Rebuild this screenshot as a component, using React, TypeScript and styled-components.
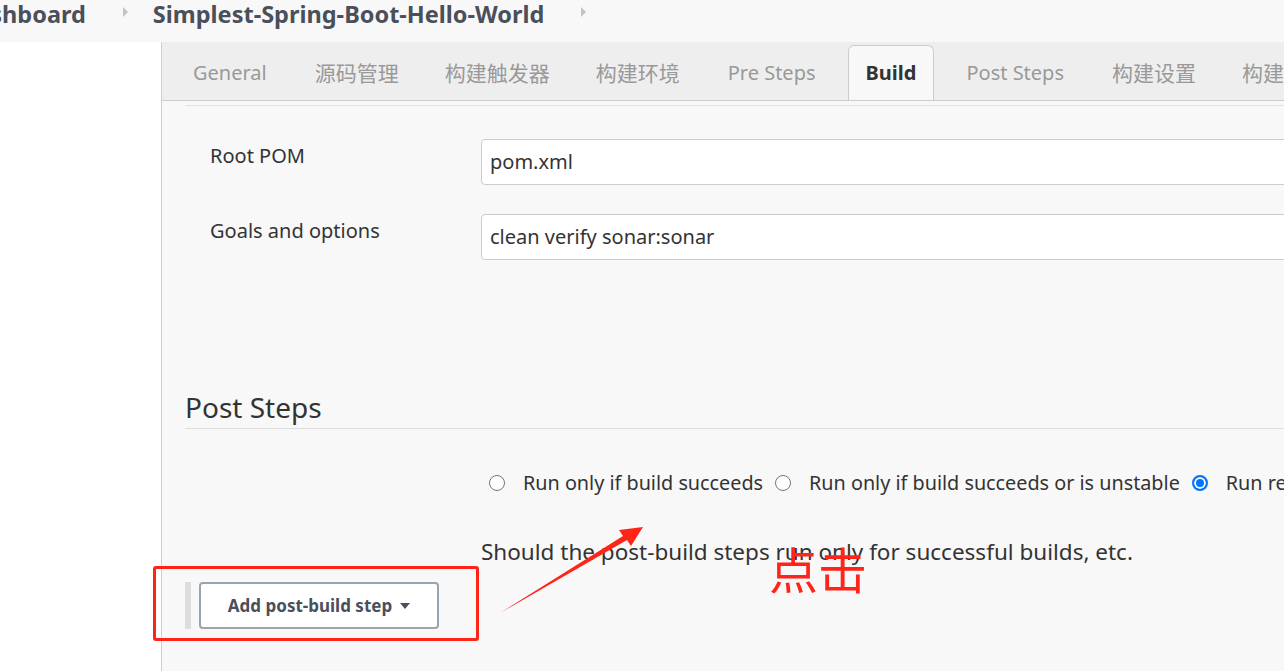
import React from "react";
import styled, { createGlobalStyle } from "styled-components";

const GlobalStyle = createGlobalStyle`
  html, body { margin: 0; padding: 0; }
  body {
    font-family: "Noto Sans", "Noto Sans CJK SC", sans-serif;
    background: #ffffff;
    color: #333;
    overflow: hidden;
  }
`;

const Page = styled.div`
  position: relative;
  width: 1284px;
  height: 671px;
  overflow: hidden;
  display: flex;
  flex-direction: column;
`;

const TopBar = styled.div`
  height: 42px;
  flex: 0 0 42px;
  background: #f8f8f8;
  display: flex;
  align-items: center;
  white-space: nowrap;
  overflow: hidden;
`;

const Crumb = styled.span<{ $offset?: number }>`
  font-size: 23.5px;
  font-weight: 700;
  color: #4a4f5a;
  margin-left: ${(p) => p.$offset ?? 0}px;
  line-height: 28px;
  margin-top: -14px;
`;

const Sep = styled.span`
  display: inline-block;
  flex: 0 0 auto;
  width: 0;
  height: 0;
  border-top: 5px solid transparent;
  border-bottom: 5px solid transparent;
  border-left: 5px solid #c4c4c4;
  margin: -18px 25px 0 37px;
`;

const Body = styled.div`
  flex: 1;
  display: flex;
  min-height: 0;
`;

const Sidebar = styled.div`
  width: 161px;
  flex: 0 0 161px;
  background: #ffffff;
  border-right: 1px solid #cfcfcf;
`;

const Main = styled.div`
  flex: 1;
  background: #f8f8f8;
  overflow: hidden;
  display: flex;
  flex-direction: column;
`;

const TabBar = styled.div`
  height: 58px;
  flex: 0 0 58px;
  background: #eeeeee;
  border-bottom: 1px solid #cccccc;
  display: flex;
  align-items: flex-end;
  padding-left: 6px;
  white-space: nowrap;
`;

const Tab = styled.div<{ $active?: boolean; $cjk?: boolean }>`
  height: 55px;
  box-sizing: border-box;
  margin: 0 7px;
  padding: 0 ${(p) => (p.$cjk ? "15px" : "17px")} 2px;
  display: flex;
  align-items: center;
  font-size: ${(p) => (p.$cjk ? "21px" : "20px")};
  color: ${(p) => (p.$active ? "#333" : "#999")};
  font-weight: ${(p) => (p.$active ? 700 : 400)};
  background: ${(p) => (p.$active ? "#f8f8f8" : "transparent")};
  border: 1px solid ${(p) => (p.$active ? "#cccccc" : "transparent")};
  border-bottom: none;
  border-radius: 6px 6px 0 0;
`;

const Content = styled.div`
  padding-left: 23px;
  padding-top: 4px;
  min-width: 1400px;
`;

const Section = styled.div`
  border-top: 1px solid #e2e2e2;
  padding-top: 33px;
`;

const FormRow = styled.div`
  display: flex;
  align-items: flex-start;
  margin-bottom: 29px;
`;

const Label = styled.div`
  width: 271px;
  padding-left: 25px;
  font-size: 20px;
  color: #333;
  line-height: 28px;
  padding-top: 3px;
`;

const TextInput = styled.div`
  width: 1000px;
  height: 46px;
  box-sizing: border-box;
  background: #ffffff;
  border: 1px solid #cccccc;
  border-radius: 4px;
  padding-left: 8px;
  padding-bottom: 2px;
  display: flex;
  align-items: center;
  font-size: 20px;
  color: #333;
`;

const Heading = styled.h2`
  margin: 127px 0 0;
  font-size: 28px;
  font-weight: 400;
  color: #333;
  line-height: 40px;
  padding-bottom: 1px;
  border-bottom: 1px solid #dddddd;
`;

const RadioRow = styled.div`
  display: flex;
  align-items: center;
  margin: 40px 0 0 300px;
  white-space: nowrap;
`;

const Radio = styled.span<{ $checked?: boolean }>`
  width: 16px;
  height: 16px;
  box-sizing: border-box;
  border-radius: 50%;
  background: ${(p) => (p.$checked ? "#0075ff" : "#fff")};
  border: ${(p) => (p.$checked ? "2px solid #0075ff" : "1px solid #767676")};
  box-shadow: ${(p) => (p.$checked ? "inset 0 0 0 2px #fff" : "none")};
  margin-left: 4px;
  margin-right: 18px;
  flex: 0 0 auto;
`;

const RadioLabel = styled.span`
  font-size: 19.8px;
  color: #333;
  margin-right: 8px;
  line-height: 28px;
`;

const Description = styled.div`
  margin: 40px 0 0 296px;
  font-size: 22.5px;
  color: #333;
  line-height: 30px;
  white-space: nowrap;
`;

const ButtonRow = styled.div`
  display: flex;
  align-items: stretch;
  margin-top: 15px;
  gap: 8px;
`;

const Strip = styled.div`
  width: 6px;
  background: #dddddd;
`;

const AddButton = styled.div`
  width: 240px;
  height: 47px;
  box-sizing: border-box;
  background: #ffffff;
  border: 2px solid #9aa4ad;
  border-radius: 4px;
  display: flex;
  align-items: center;
  justify-content: center;
  gap: 8px;
  font-size: 17px;
  font-weight: 700;
  color: #4a4f5a;
`;

const Caret = styled.span`
  width: 0;
  height: 0;
  border-left: 5px solid transparent;
  border-right: 5px solid transparent;
  border-top: 6px solid #4a4f5a;
`;

const Annotation = styled.div`
  position: absolute;
  left: 153px;
  top: 566px;
  width: 326px;
  height: 75px;
  box-sizing: border-box;
  border: 3px solid #ff2318;
  border-radius: 3px;
`;

const ClickNote = styled.div`
  position: absolute;
  left: 769px;
  top: 536px;
  font-family: "Noto Sans CJK SC", sans-serif;
  font-size: 49px;
  line-height: 64px;
  color: #ff2318;
`;

const ArrowSvg = styled.svg`
  position: absolute;
  left: 495px;
  top: 520px;
`;

export default function App() {
  return (
    <>
      <GlobalStyle />
      <Page>
        <TopBar>
          <Crumb $offset={-41}>Dashboard</Crumb>
          <Sep />
          <Crumb>Simplest-Spring-Boot-Hello-World</Crumb>
          <Sep />
        </TopBar>
        <Body>
          <Sidebar />
          <Main>
            <TabBar>
              <Tab>General</Tab>
              <Tab $cjk>源码管理</Tab>
              <Tab $cjk>构建触发器</Tab>
              <Tab $cjk>构建环境</Tab>
              <Tab>Pre Steps</Tab>
              <Tab $active>Build</Tab>
              <Tab>Post Steps</Tab>
              <Tab $cjk>构建设置</Tab>
              <Tab $cjk>构建后操作</Tab>
            </TabBar>
            <Content>
              <Section>
                <FormRow>
                  <Label>Root POM</Label>
                  <TextInput>pom.xml</TextInput>
                </FormRow>
                <FormRow>
                  <Label>Goals and options</Label>
                  <TextInput>clean verify sonar:sonar</TextInput>
                </FormRow>
              </Section>
              <Heading>Post Steps</Heading>
              <RadioRow>
                <Radio />
                <RadioLabel>Run only if build succeeds</RadioLabel>
                <Radio />
                <RadioLabel>Run only if build succeeds or is unstable</RadioLabel>
                <Radio $checked />
                <RadioLabel>Run regardless of build result</RadioLabel>
              </RadioRow>
              <Description>
                Should the post-build steps run only for successful builds, etc.
              </Description>
              <ButtonRow>
                <Strip />
                <AddButton>
                  Add post-build step
                  <Caret />
                </AddButton>
              </ButtonRow>
            </Content>
          </Main>
        </Body>
        <Annotation />
        <ArrowSvg width="160" height="100" viewBox="0 0 160 100">
          <path d="M5 93 L128 16 L124 10 L148 7 L136 26 L132 20 Z" fill="#ff2318" />
        </ArrowSvg>
        <ClickNote>点击</ClickNote>
      </Page>
    </>
  );
}
